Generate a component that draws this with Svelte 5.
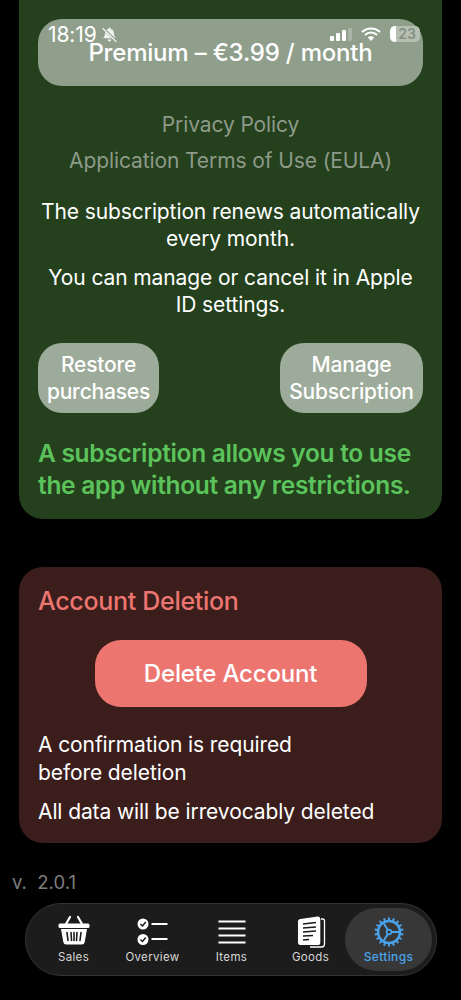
<script>
  const tabs = ['Sales', 'Overview', 'Items', 'Goods', 'Settings'];
  const teeth = Array.from({ length: 18 }, (_, i) => i * 20);
</script>

<main class="screen">
  <section class="card sub">
    <button class="price">Premium – €3.99 / month</button>

    <div class="links">
      <a href="#privacy">Privacy Policy</a>
      <a href="#eula">Application Terms of Use (EULA)</a>
    </div>

    <p class="note first">The subscription renews automatically every month.</p>
    <p class="note second">You can manage or cancel it in Apple ID settings.</p>

    <div class="actions">
      <button class="small restore">Restore<br />purchases</button>
      <button class="small manage">Manage<br />Subscription</button>
    </div>

    <p class="promo">A subscription allows you to use the app without any restrictions.</p>
  </section>

  <section class="card danger">
    <h2>Account Deletion</h2>
    <button class="delete">Delete Account</button>
    <p class="warn">A confirmation is required<br />before deletion</p>
    <p class="warn last">All data will be irrevocably deleted</p>
  </section>

  <div class="version">v.&nbsp; 2.0.1</div>

  <nav class="tabbar">
    {#each tabs as tab}
      <div class="tab" class:active={tab === 'Settings'}>
        <svg viewBox="0 0 36 36" width="36" height="36" aria-hidden="true">
          {#if tab === 'Sales'}
            <path d="M10 10 14 3M26 10 22 3" stroke="#fff" stroke-width="2.200" stroke-linecap="round" fill="none" />
            <rect x="2.500" y="9.500" width="31" height="4.500" rx="1.500" fill="#fff" />
            <path d="M5 15h26l-2.300 13a3 3 0 0 1-3 2.500H10.300a3 3 0 0 1-3-2.500Z" fill="#fff" />
            <path d="M11 18.500l1 8M15 18.500l.5 8M18 18.500v8M21 18.500l-.5 8M25 18.500l-1 8" stroke="#1c1c1c" stroke-width="1.600" stroke-linecap="round" />
          {:else if tab === 'Overview'}
            <circle cx="8" cy="10" r="5.500" fill="#fff" />
            <circle cx="8" cy="25.500" r="5.500" fill="#fff" />
            <path d="M5.500 10l2 2 3.200-4M5.500 25.500l2 2 3.200-4" stroke="#1c1c1c" stroke-width="1.500" fill="none" />
            <path d="M16.500 10h16M16.500 25h16" stroke="#fff" stroke-width="2" />
          {:else if tab === 'Items'}
            <path d="M4.500 5.500h27M4.500 12.500h27M4.500 19.500h27M4.500 26.500h27" stroke="#fff" stroke-width="2" transform="translate(0 2)" />
          {:else if tab === 'Goods'}
            <path d="M28 5h1.500a2 2 0 0 1 2 2v23a3 3 0 0 1-3 3H17" fill="none" stroke="#fff" stroke-width="1.300" />
            <path d="M7.500 5 24.500 2.500a2.500 2.500 0 0 1 2.800 2.500v24a2 2 0 0 1-2 2H7.500A2.500 2.500 0 0 1 5 28.500v-21A2.500 2.500 0 0 1 7.500 5Z" fill="#fff" />
            <path d="M10 10l13-1.500M10 14l13-1M10 18l13-1M10 22l10-.5M10 26l6-.5" stroke="#1c1c1c" stroke-width="1.700" />
          {:else}
            <g fill="none" stroke="#4aa3ea">
              <circle cx="18" cy="18" r="11" stroke-width="2.400" />
              <circle cx="18" cy="18" r="2.400" stroke-width="1.600" />
              <path d="M20.400 18H29M16.800 16 12 8M16.800 20 12 28" stroke-width="2" />
              {#each teeth as a}
                <path d="M18 3.500v3" stroke-width="2" transform="rotate({a} 18 18)" />
              {/each}
            </g>
          {/if}
        </svg>
        <span>{tab}</span>
      </div>
    {/each}
  </nav>

  <!-- system status bar, drawn over the scrolled content -->
  <div class="status">
    <span class="time">18:19</span>
    <svg class="bell" viewBox="0 0 16 16" width="17" height="17" aria-hidden="true">
      <path d="M8 1.500a1 1 0 0 1 1 1c2.300.5 3.200 2.300 3.200 4.500 0 2.500 1.300 3.500 1.800 4.500H2c.5-1 1.800-2 1.800-4.500 0-2.200.9-4 3.200-4.500a1 1 0 0 1 1-1ZM6.200 12.800h3.600a1.800 1.800 0 0 1-3.600 0Z" fill="#fff" opacity=".85" />
      <path d="M1.500 1.500l13 13" stroke="#8f9f8c" stroke-width="2.400" />
      <path d="M1.500 2l13 13" stroke="#fff" stroke-width="1" />
    </svg>
    <span class="spacer"></span>
    <span class="signal"><i></i><i></i><i></i><i class="off"></i></span>
    <svg class="wifi" viewBox="0 0 20 14" width="20" height="14" aria-hidden="true">
      <path d="M1 5a13 13 0 0 1 18 0M4 8a8.600 8.600 0 0 1 12 0" fill="none" stroke="#fff" stroke-width="2" />
      <path d="M6.800 10.600a4.600 4.600 0 0 1 6.400 0L10 14Z" fill="#fff" />
    </svg>
    <span class="battery"><span class="level"></span><span class="num">23</span></span>
  </div>
</main>

<style>
  :global(body) {
    margin: 0;
    background: #000;
  }

  .screen {
    position: relative;
    width: 461px;
    height: 1000px;
    overflow: hidden;
    background: #000;
    color: #fff;
    font-family: Inter, "Liberation Sans", sans-serif;
    padding: 0 19px;
    box-sizing: border-box;
  }

  button {
    border: 0;
    font-family: inherit;
    color: #fff;
    padding: 0;
  }

  .card {
    border-radius: 24px;
    box-sizing: border-box;
  }

  .sub {
    height: 519px;
    padding: 19px 19px 0;
    background: #24401d;
    border-radius: 0 0 24px 24px;
    text-align: center;
  }

  .price {
    display: block;
    width: 100%;
    height: 67px;
    background: #8f9f8c;
    border-radius: 24px;
    font-size: 24px;
    font-weight: 500;
    letter-spacing: -0.2px;
  }

  .links {
    display: flex;
    flex-direction: column;
    gap: 11px;
    margin-top: 26px;
  }

  .links a {
    color: #8d9a89;
    font-size: 21px;
    line-height: 25px;
    text-decoration: none;
    letter-spacing: -0.1px;
  }

  .note {
    margin: 0;
    font-size: 21px;
    line-height: 27px;
    letter-spacing: -0.1px;
  }

  .first {
    margin-top: 25px;
  }

  .second {
    margin: 12px 8px 0;
  }

  .actions {
    display: flex;
    justify-content: space-between;
    margin-top: 25px;
  }

  .small {
    height: 70px;
    background: #9dab9a;
    border-radius: 24px;
    font-size: 21px;
    font-weight: 500;
    line-height: 27px;
    letter-spacing: -0.2px;
  }

  .restore {
    width: 121px;
  }

  .manage {
    width: 143px;
  }

  .promo {
    margin: 24px 0 0;
    color: #5cc35c;
    font-size: 24.500px;
    font-weight: 600;
    line-height: 32px;
    text-align: left;
    letter-spacing: -0.3px;
  }

  .danger {
    height: 276px;
    margin-top: 48px;
    padding: 20px 19px 0;
    background: #3b1e1c;
  }

  h2 {
    margin: 0;
    color: #ec7570;
    font-size: 25px;
    font-weight: 500;
    line-height: 29px;
    letter-spacing: -0.3px;
  }

  .delete {
    display: block;
    width: 272px;
    height: 67px;
    margin: 24px auto 0;
    background: #ec7570;
    border-radius: 26px;
    font-size: 24px;
    font-weight: 500;
    letter-spacing: -0.2px;
  }

  .warn {
    margin: 24px 0 0;
    font-size: 21px;
    line-height: 28px;
    letter-spacing: -0.1px;
  }

  .warn.last {
    margin-top: 11px;
  }

  .version {
    margin: 28px 0 0 -7px;
    color: #7d7d7d;
    font-size: 18.500px;
    line-height: 22px;
  }

  .tabbar {
    display: flex;
    align-items: center;
    box-sizing: border-box;
    width: 412px;
    height: 73px;
    margin: 10px 0 0 6px;
    padding: 0 3px 0 8px;
    background: #1c1c1c;
    border: 1px solid #333;
    border-radius: 36px;
  }

  .tab {
    flex: 0 0 79px;
    height: 63px;
    display: flex;
    flex-direction: column;
    align-items: center;
    justify-content: center;
    gap: 0;
    padding-bottom: 2px;
    box-sizing: border-box;
    color: #d8d8d8;
    font-size: 11.500px;
    font-weight: 400;
    letter-spacing: 0.35px;
    line-height: 14px;
  }

  .tab.active {
    flex: 0 0 87px;
    margin-left: -5px;
    background: #373737;
    border-radius: 32px;
    color: #4aa3ea;
    font-weight: 500;
    font-size: 12px;
  }

  .status {
    position: absolute;
    top: 22px;
    left: 48px;
    right: 41px;
    height: 24px;
    display: flex;
    align-items: center;
  }

  .time {
    font-size: 21px;
    font-weight: 400;
    letter-spacing: -0.1px;
  }

  .bell {
    margin-left: 4px;
  }

  .spacer {
    flex: 1;
  }

  .signal {
    display: flex;
    align-items: flex-end;
    gap: 2px;
    height: 13px;
    margin-right: 9px;
  }

  .signal i {
    width: 4px;
    height: 5px;
    background: #fff;
    border-radius: 1px;
  }

  .signal i:nth-child(2) {
    height: 8px;
  }

  .signal i:nth-child(3) {
    height: 11px;
  }

  .signal i.off {
    height: 13px;
    background: #a9b5a6;
  }

  .wifi {
    margin-right: 9px;
  }

  .battery {
    position: relative;
    width: 30px;
    height: 16px;
    border-radius: 5px;
    background: #b5c0b2;
    overflow: hidden;
    font-size: 14px;
    font-weight: 600;
    line-height: 16px;
    text-align: center;
    color: #858f83;
  }

  .level {
    position: absolute;
    left: 0;
    top: 0;
    bottom: 0;
    width: 6px;
    background: #fff;
  }

  .num {
    position: relative;
    left: 2px;
  }
</style>
